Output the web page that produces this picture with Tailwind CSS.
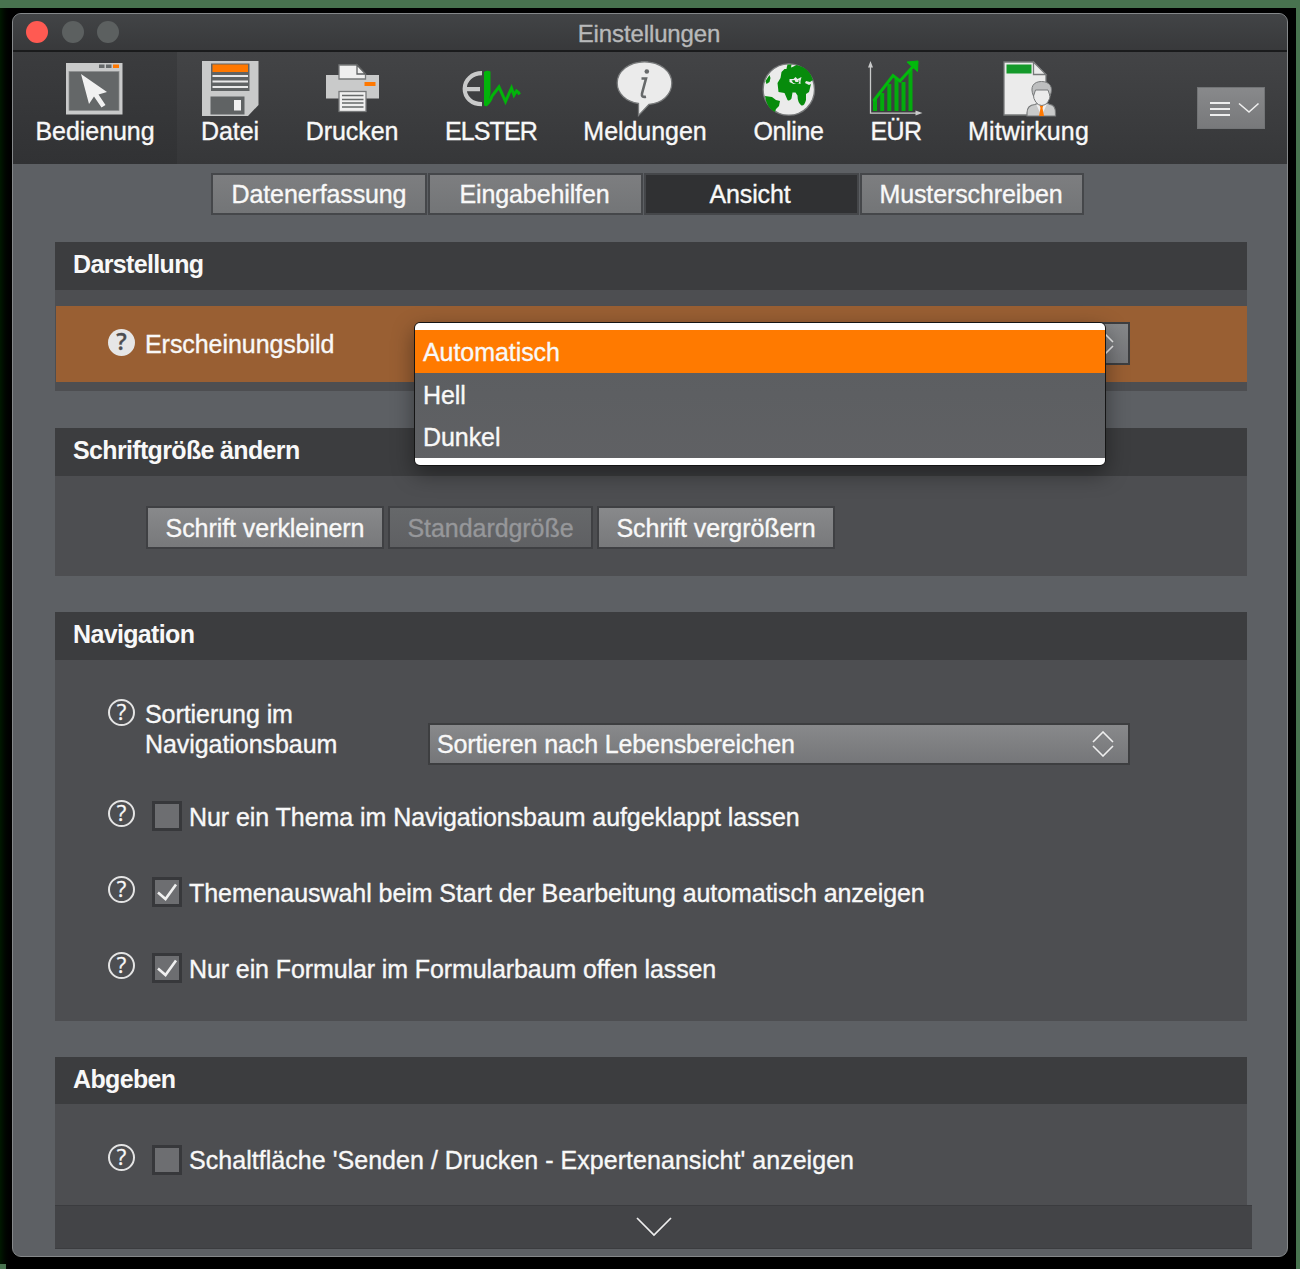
<!DOCTYPE html>
<html lang="de">
<head>
<meta charset="utf-8">
<title>Einstellungen</title>
<script src="https://cdn.jsdelivr.net/npm/@tailwindcss/browser@4"></script>
</head>
<body class="h-[1269px] w-[1300px] overflow-hidden bg-[#48734f] font-['Liberation_Sans',Arial,sans-serif] text-[25px] leading-[30px] tracking-[-0.06px] text-[#f8f8f8] [-webkit-text-stroke:0.35px_currentColor]">
<div class="relative mt-2 flex h-[1261px] w-[1296px] bg-linear-to-r from-[#001800] via-black via-[1%] to-black pt-[5px] pl-3">
<span class="absolute bottom-0 left-0 h-[5px] w-[6px] bg-[#48734f]"></span>
<div class="relative flex h-[1244px] w-[1276px] flex-col overflow-hidden rounded-[9px] border border-[#85888a] bg-[#5d6064]">

  <!-- title bar -->
  <header class="grid h-[38px] shrink-0 grid-cols-3 items-center border-b-2 border-[#1a1b1c] bg-linear-to-b from-[#424446] to-[#38393b]">
    <div class="flex gap-[13.5px] pl-[13px]">
      <span class="size-[22px] rounded-full bg-[#ff5a52]"></span>
      <span class="size-[22px] rounded-full bg-[#5c6060]"></span>
      <span class="size-[22px] rounded-full bg-[#5c6060]"></span>
    </div>
    <h1 class="pt-[3px] pr-[2px] text-center text-[24px] tracking-[-0.12px] text-[#b8b9ba]">Einstellungen</h1>
  </header>

  <!-- toolbar -->
  <nav class="flex h-[112px] shrink-0 bg-linear-to-b from-[#434446] to-[#363739] leading-[28px] tracking-[-0.05px]">
    <a class="flex w-[164px] flex-col items-center bg-linear-to-b from-[#3b3c3e] to-[#313234] pt-[6px]">
      <svg class="h-[59px] w-[60px]" viewBox="65 58 60 59">
        <rect x="66" y="63" width="56.500" height="51.500" fill="#c9caca"/>
        <rect x="69" y="71.500" width="50" height="39" fill="#646768" stroke="#8b8d8e" stroke-width=".7"/>
        <path d="M99 64.500h5.500v3.500H99zM106 64.500h5.500v3.500H106z" fill="#66696a"/><path d="M113 64.500h6v3.500h-6z" fill="#ff7800"/>
        <path d="M81 74l8 30 5-7.500 7.500 11 4-2.500-7-10.500 8.500-2.500z" fill="#f1f1f1"/>
      </svg>
      <span>Bedienung</span>
    </a>
    <a class="flex w-[106px] flex-col items-center pt-[6px]">
      <svg class="h-[59px] w-[60px]" viewBox="200 58 60 59">
        <path d="M202 61h56.500v44L248 116h-46z" fill="#c9caca"/>
        <rect x="211" y="63.500" width="38.500" height="27.500" fill="#606364"/>
        <rect x="212.500" y="64.500" width="35.500" height="7.500" fill="#ff7800"/>
        <path d="M212.500 76h35.500M212.500 81.500h35.500M212.500 87h35.500" stroke="#e9e9e9" stroke-width="1.800"/>
        <rect x="210.500" y="96.500" width="34" height="18" fill="#606364"/>
        <rect x="234" y="100" width="7" height="10.500" fill="#f1f1f1"/>
      </svg>
      <span>Datei</span>
    </a>
    <a class="flex w-[138px] flex-col items-center pt-[6px]">
      <svg class="h-[59px] w-[60px]" viewBox="322 58 60 59">
        <rect x="326" y="75" width="53" height="23.500" fill="#c9caca"/>
        <path d="M339 65h18l8.500 9v5h-26.500z" fill="#efefef" stroke="#77797a" stroke-width="1.300"/>
        <path d="M357 65v9h8.500z" fill="#efefef" stroke="#5e6061" stroke-width="1.300"/>
        <rect x="364.500" y="82" width="11" height="4" fill="#ff7800"/>
        <rect x="339" y="91.500" width="27" height="20" fill="#efefef" stroke="#77797a" stroke-width="1.300"/>
        <path d="M342 95.500h21.500M342 99.500h21.500M342 103h21.500M342 107h21.500" stroke="#66696a" stroke-width="1.300"/>
      </svg>
      <span>Drucken</span>
    </a>
    <a class="flex w-[140px] flex-col items-center pt-[6px]">
      <svg class="h-[59px] w-[60px]" viewBox="461 58 60 59" fill="none">
        <path d="M482 73.200c-10 0-17.300 6.800-17.300 15.600 0 9 7 15.400 17.300 15.400M466 89.200h14" stroke="#c9caca" stroke-width="4.200"/>
        <path d="M484 72q3-2 6.500-.5V93q-1 8-4 13.500l-2.500-1z" fill="#02b40a"/>
        <path d="M486 105q4-3 6-9l7-9 6.500 14.500 6-13.500 2.500 7 2.500-4 2 1.500 1 2" stroke="#02b40a" stroke-width="3" stroke-linejoin="miter"/>
      </svg>
      <span class="tracking-[-0.9px]">ELSTER</span>
    </a>
    <a class="flex w-[168px] flex-col items-center pt-[6px]">
      <svg class="h-[59px] w-[60px]" viewBox="615 58 60 59">
        <path d="M644.500 61.800c15.500 0 27.300 9.400 27.300 21.300 0 11.500-9.800 20.400-22.800 21.200L638.500 115.500v-12c-12-1.500-21.300-9.500-21.300-20.400 0-11.900 11.800-21.300 27.300-21.300z" fill="#ebebeb" stroke="#77797a" stroke-width="1.300"/>
        <circle cx="646.800" cy="71.500" r="2.300" fill="#66696a"/>
        <path d="M641.500 78.500h4.500l-4 15q-.8 4.200 4 3.200" fill="none" stroke="#66696a" stroke-width="2.600"/>
      </svg>
      <span>Meldungen</span>
    </a>
    <a class="flex w-[119px] flex-col items-center pt-[6px]">
      <svg class="h-[59px] w-[60px]" viewBox="758.5 58 60 59">
        <circle cx="788.300" cy="89.500" r="25.700" fill="#ebebeb" stroke="#77797a" stroke-width="1.300"/>
        <path d="M787 64.500l4 0-1 6-3 2-1-4zM792 67l4-2c9 2 14 7 16.500 15l-3 2-4-1-1 2 4 2 2-1-2 8-3 2v6q-1.500 6-4.500 5.500-4-3-4-10l-2-3-3 0-1 6q-2 3-4 1.500l-3-7-6-1-1-9 3-5 1-6 3-3 2 0z" fill="#078b0c"/>
        <path d="M789 79l4 0 2-2 2 2 4-2-1 4 0 3-4-1-3 1-4-2z" fill="#ebebeb"/><path d="M791 80.500l3-.5 1 2h3v-2l1 1-1 2.500-5-.5z" fill="#078b0c"/>
        <path d="M783 71l2 6-4 1 1-6zM769 75l-4 6 1 3 3-2 1-4zM764.500 96l7 1 4 3 4 1-1 5-3 3-1 3c-6-3-9-9-10-16z" fill="#078b0c"/>
      </svg>
      <span class="tracking-[-0.4px]">Online</span>
    </a>
    <a class="flex w-[96px] flex-col items-center pt-[6px]">
      <svg class="h-[59px] w-[60px]" viewBox="866 58 60 59" fill="none">
        <path d="M870.500 66v47.200H918" stroke="#c9caca" stroke-width="1.300"/>
        <path d="M868 67.500l2.500-6.500 2.500 6.500zM915.500 110.500l7 2.500-7 2.500z" fill="#c9caca"/>
        <path d="M875 111V99M882.200 111V93M889.300 111V84M896.500 111V79M903.500 111V82M910.500 111V70" stroke="#02ac0c" stroke-width="4"/>
        <path d="M873.500 101l19.500-25.500 7 5.500 13-14.500" stroke="#02b90c" stroke-width="3"/>
        <path d="M907 62l11-1-.5 10.500z" fill="#02b90c" stroke="#02b90c"/>
      </svg>
      <span class="tracking-[-0.6px]">EÜR</span>
    </a>
    <a class="flex w-[169px] flex-col items-center pt-[6px]">
      <svg class="h-[59px] w-[60px]" viewBox="998.5 58 60 59">
        <path d="M1003.500 62h29.500l12.500 13v40h-42z" fill="#ebebeb" stroke="#77797a" stroke-width="1.300"/>
        <path d="M1033 62v12.500h12.500z" fill="#ebebeb" stroke="#77797a" stroke-width="1.300"/>
        <rect x="1006" y="64.500" width="25" height="9" fill="#14992a"/>
        <path d="M1026.500 116v-3q0-8 8-8.500l4-2h7l4 2q5.500.5 5.500 8.500v3z" fill="#c9caca" stroke="#77797a" stroke-width="1.200"/>
        <path d="M1036 105l5 11 5-11z" fill="#efefef"/>
        <path d="M1039 105h4l-1 3 1.500 8h-5l1.500-8z" fill="#ff7800"/>
        <ellipse cx="1041.300" cy="94" rx="8.500" ry="11.500" fill="#ebebeb" stroke="#77797a"/>
        <path d="M1033 96c-4-9 0-14.500 8-14.500s12.500 5.500 8.500 14.500l-2-6h-12.500z" fill="#bdbebf" stroke="#77797a"/>
      </svg>
      <span class="tracking-[0.15px]">Mitwirkung</span>
    </a>
    <button class="mt-[35px] ml-[84px] flex h-[42px] w-[68px] items-center justify-center border border-[#727476] bg-linear-to-b from-[#88898b] to-[#78797b]">
      <svg class="h-[40px] w-[66px]" viewBox="1198 88 66 40" fill="none" stroke="#eeeeee">
        <path d="M1210 103h20M1210 109h20M1210 115h20" stroke-width="2"/><path d="M1239 103.500l10 8.500 9.500-8.500" stroke-width="1.600"/>
      </svg>
    </button>
  </nav>

  <!-- tabs -->
  <div class="mt-[9px] ml-[198px] flex h-[42px] shrink-0 gap-[1px] leading-[39px] tracking-[-0.12px]">
    <button class="w-[216px] border-2 border-[#45474a] bg-linear-to-b from-[#7d7e80] to-[#737577]">Datenerfassung</button>
    <button class="w-[215px] border-2 border-[#45474a] bg-linear-to-b from-[#7d7e80] to-[#737577] pr-[2px]">Eingabehilfen</button>
    <button class="w-[215px] border-2 border-[#45474a] bg-[#303133] pr-[3px]">Ansicht</button>
    <button class="w-[224px] border-2 border-[#45474a] bg-linear-to-b from-[#7d7e80] to-[#737577] pr-[2px]">Musterschreiben</button>
  </div>

  <main class="mt-[27px] ml-[42px] flex w-[1192px] shrink-0 flex-col">
    <section class="h-[149px] bg-[#4d4e51]">
      <h2 class="h-[48px] bg-[#3c3d3f] pt-[7px] pl-[18px] font-bold tracking-[-0.65px] [-webkit-text-stroke:0]">Darstellung</h2>
      <div class="mt-[16px] ml-px flex h-[76px] items-start bg-[#995f33]">
        <span class="mt-[23px] ml-[52px] flex size-[27px] items-center justify-center rounded-full bg-[#e6e6e6] pb-[3px] font-['Open_Sans',sans-serif] text-[23px] font-semibold text-[#4b4d50]">?</span>
        <span class="mt-[23px] ml-[10px] w-[283px]">Erscheinungsbild</span>
        <div class="mt-[16px] flex h-[43px] w-[702px] items-center justify-end border-2 border-[#3d3e40] bg-linear-to-b from-[#86888a] to-[#757679] pr-[14px]">
          <svg class="h-[26px] w-[22px]" viewBox="0 0 22 26" fill="none" stroke="#eeeeee" stroke-width="1.600"><path d="M1 11L11 1l10 10M1 15l10 10 10-10"/></svg>
        </div>
      </div>
    </section>

    <section class="mt-[37px] h-[148px] bg-[#4d4e51]">
      <h2 class="h-[48px] bg-[#3c3d3f] pt-[7px] pl-[18px] font-bold tracking-[-0.65px] [-webkit-text-stroke:0]">Schriftgröße ändern</h2>
      <div class="mt-[30px] ml-[91px] flex gap-[4px] leading-[41px]">
        <button class="h-[43px] w-[238px] border-2 border-[#3f4043] bg-linear-to-b from-[#88898b] to-[#78797b]">Schrift verkleinern</button>
        <button class="h-[43px] w-[205px] border-2 border-[#3f4043] bg-linear-to-b from-[#66686a] to-[#5f6063] text-[#96979a]">Standardgröße</button>
        <button class="h-[43px] w-[238px] border-2 border-[#3f4043] bg-linear-to-b from-[#88898b] to-[#78797b]">Schrift vergrößern</button>
      </div>
    </section>

    <section class="mt-[36px] h-[409px] bg-[#4d4e51]">
      <h2 class="h-[48px] bg-[#3c3d3f] pt-[7px] pl-[18px] font-bold tracking-[-0.65px] [-webkit-text-stroke:0]">Navigation</h2>
      <div class="flex h-[141px] items-start pl-[53px]">
        <span class="mt-[39px] flex size-[27px] items-center justify-center rounded-full border-2 border-[#e4e4e4] pb-[3px] font-['Open_Sans',sans-serif] text-[22px]">?</span>
        <span class="mt-[39px] ml-[10px] w-[283px]">Sortierung im<br>Navigationsbaum</span>
        <div class="mt-[63px] flex h-[42px] w-[702px] items-center justify-between border-2 border-[#3d3e40] bg-linear-to-b from-[#88898b] to-[#757679] pr-[14px] pl-[7px]">
          <span class="tracking-[-0.12px]">Sortieren nach Lebensbereichen</span>
          <svg class="h-[26px] w-[22px]" viewBox="0 0 22 26" fill="none" stroke="#eeeeee" stroke-width="1.600"><path d="M1 11L11 1l10 10M1 15l10 10 10-10"/></svg>
        </div>
      </div>
      <div class="flex h-[76px] items-start pl-[53px]">
        <span class="-mt-px flex size-[27px] items-center justify-center rounded-full border-2 border-[#e4e4e4] pb-[3px] font-['Open_Sans',sans-serif] text-[22px]">?</span>
        <span class="ml-[17px] size-[30px] border-[3px] border-[#37383b] bg-[#6d6e71]"></span>
        <span class="mt-px ml-[7px]">Nur ein Thema im Navigationsbaum aufgeklappt lassen</span>
      </div>
      <div class="flex h-[76px] items-start pl-[53px]">
        <span class="-mt-px flex size-[27px] items-center justify-center rounded-full border-2 border-[#e4e4e4] pb-[3px] font-['Open_Sans',sans-serif] text-[22px]">?</span>
        <span class="ml-[17px] size-[30px] border-[3px] border-[#37383b] bg-[#6d6e71]"><svg class="size-6" viewBox="0 0 24 24" fill="none" stroke="#f0f0f0" stroke-width="2.600"><path d="M3 12.500l7.500 6.500L21 4.500"/></svg></span>
        <span class="mt-px ml-[7px]">Themenauswahl beim Start der Bearbeitung automatisch anzeigen</span>
      </div>
      <div class="flex items-start pl-[53px]">
        <span class="-mt-px flex size-[27px] items-center justify-center rounded-full border-2 border-[#e4e4e4] pb-[3px] font-['Open_Sans',sans-serif] text-[22px]">?</span>
        <span class="ml-[17px] size-[30px] border-[3px] border-[#37383b] bg-[#6d6e71]"><svg class="size-6" viewBox="0 0 24 24" fill="none" stroke="#f0f0f0" stroke-width="2.600"><path d="M3 12.500l7.500 6.500L21 4.500"/></svg></span>
        <span class="mt-px ml-[7px] tracking-[-0.1px]">Nur ein Formular im Formularbaum offen lassen</span>
      </div>
    </section>

    <section class="mt-[36px] h-[148px] bg-[#4d4e51]">
      <h2 class="h-[47px] bg-[#3c3d3f] pt-[7px] pl-[18px] font-bold tracking-[-0.65px] [-webkit-text-stroke:0]">Abgeben</h2>
      <div class="flex items-start pt-[41px] pl-[53px]">
        <span class="-mt-px flex size-[27px] items-center justify-center rounded-full border-2 border-[#e4e4e4] pb-[3px] font-['Open_Sans',sans-serif] text-[22px]">?</span>
        <span class="ml-[17px] size-[30px] border-[3px] border-[#37383b] bg-[#6d6e71]"></span>
        <span class="ml-[7px] tracking-[0.04px]">Schaltfläche 'Senden / Drucken - Expertenansicht' anzeigen</span>
      </div>
    </section>
  </main>

  <footer class="ml-[42px] flex h-[44px] w-[1197px] shrink-0 items-center justify-center border-y border-[#3b3c3f] bg-[#434447]">
    <svg class="h-[20px] w-[36px]" viewBox="0 0 36 20" fill="none" stroke="#eeeeee" stroke-width="1.700"><path d="M1 1l17 17L35 1"/></svg>
  </footer>

  <!-- open menu of the appearance select -->
  <ul class="absolute top-[308px] left-[401px] flex h-[144px] w-[692px] flex-col rounded-[6px] border border-[#151515] bg-linear-to-b from-[#5a5d60] to-[#606164] leading-[44px] shadow-[0_8px_22px_rgba(0,0,0,0.4)]">
    <li class="h-[7px] shrink-0 rounded-t-[5px] bg-white"></li>
    <li class="h-[43px] shrink-0 bg-[#ff7a00] pl-[8px] leading-[45px]">Automatisch</li>
    <li class="h-[42px] shrink-0 pl-[8px]">Hell</li>
    <li class="h-[43px] shrink-0 pl-[8px] leading-[45px]">Dunkel</li>
    <li class="h-[7px] shrink-0 rounded-b-[5px] bg-white"></li>
  </ul>
</div>
</div>
</body>
</html>
